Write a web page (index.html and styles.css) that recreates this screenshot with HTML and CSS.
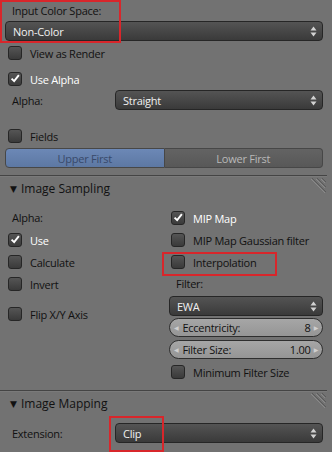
FILE: index.html
```html
<!DOCTYPE html>
<html lang="en">
<head>
  <meta charset="UTF-8" />
  <title>Image Properties</title>
  <link rel="stylesheet" href="styles.css">
</head>
<body>

  <div class="panel">

    <!-- Color space -->
    <div class="label-row">Input Color Space:</div>
    <div class="select">
      <span>Non-Color</span>
      <svg class="updown" width="7" height="11" viewBox="0 0 7 11"><path d="M3.5 0.5 L6.5 4.5 L0.5 4.5 Z M3.5 10.5 L6.5 6.5 L0.5 6.5 Z" fill="#d2d2d2"/></svg>
    </div>

    <div class="check first-check">
      <span class="box"></span>View as Render
    </div>
    <div class="check on alpha-check">
      <span class="box"><svg width="14" height="14" viewBox="0 0 14 14"><path d="M3 6.5 L6 9.5 L11.5 2.5" fill="none" stroke="#fff" stroke-width="2.2"/></svg></span>Use Alpha
    </div>

    <div class="field-row">
      <div class="field-label">Alpha:</div>
      <div class="select grow">
        <span>Straight</span>
        <svg class="updown" width="7" height="11" viewBox="0 0 7 11"><path d="M3.5 0.5 L6.5 4.5 L0.5 4.5 Z M3.5 10.5 L6.5 6.5 L0.5 6.5 Z" fill="#d2d2d2"/></svg>
      </div>
    </div>

    <div class="check fields-check">
      <span class="box"></span>Fields
    </div>

    <div class="toggle">
      <div class="toggle-btn active">Upper First</div>
      <div class="toggle-btn">Lower First</div>
    </div>
  </div>

  <!-- Image Sampling -->
  <div class="sep"></div>
  <div class="section-head">
    <span class="tri">&#9660;</span>Image Sampling
    <svg class="grip" width="20" height="18" viewBox="0 0 20 18">
      <path d="M5 0 L19 14 M10 0 L19 9 M15 0 L19 4" stroke="#5a5a5a" stroke-width="1"/>
      <path d="M4 1 L18 15 M9 1 L18 10 M14 1 L18 5" stroke="#8a8a8a" stroke-width="1"/>
    </svg>
  </div>

  <div class="panel sampling">
    <div class="col">
      <div class="label-row small">Alpha:</div>
      <div class="check on">
        <span class="box"><svg width="14" height="14" viewBox="0 0 14 14"><path d="M3 6.5 L6 9.5 L11.5 2.5" fill="none" stroke="#fff" stroke-width="2.2"/></svg></span>Use
      </div>
      <div class="check"><span class="box"></span>Calculate</div>
      <div class="check"><span class="box"></span>Invert</div>
      <div class="check flip"><span class="box"></span>Flip X/Y Axis</div>
    </div>

    <div class="col right">
      <div class="check on">
        <span class="box"><svg width="14" height="14" viewBox="0 0 14 14"><path d="M3 6.5 L6 9.5 L11.5 2.5" fill="none" stroke="#fff" stroke-width="2.2"/></svg></span>MIP Map
      </div>
      <div class="check"><span class="box"></span>MIP Map Gaussian filter</div>
      <div class="check"><span class="box"></span>Interpolation</div>
      <div class="label-row small">Filter:</div>
      <div class="select ewa">
        <span>EWA</span>
        <svg class="updown" width="7" height="11" viewBox="0 0 7 11"><path d="M3.5 0.5 L6.5 4.5 L0.5 4.5 Z M3.5 10.5 L6.5 6.5 L0.5 6.5 Z" fill="#d2d2d2"/></svg>
      </div>
      <div class="num">
        <span class="arrow">&#9664;</span>
        <span class="num-label">Eccentricity:</span>
        <span class="num-val">8</span>
        <span class="arrow">&#9654;</span>
      </div>
      <div class="num second">
        <span class="arrow">&#9664;</span>
        <span class="num-label">Filter Size:</span>
        <span class="num-val">1.00</span>
        <span class="arrow">&#9654;</span>
      </div>
      <div class="check min-check"><span class="box"></span>Minimum Filter Size</div>
    </div>
  </div>

  <!-- Image Mapping -->
  <div class="sep"></div>
  <div class="section-head">
    <span class="tri">&#9660;</span>Image Mapping
    <svg class="grip" width="20" height="18" viewBox="0 0 20 18">
      <path d="M5 0 L19 14 M10 0 L19 9 M15 0 L19 4" stroke="#5a5a5a" stroke-width="1"/>
      <path d="M4 1 L18 15 M9 1 L18 10 M14 1 L18 5" stroke="#8a8a8a" stroke-width="1"/>
    </svg>
  </div>

  <div class="panel">
    <div class="field-row ext-row">
      <div class="field-label">Extension:</div>
      <div class="select grow">
        <span>Clip</span>
        <svg class="updown" width="7" height="11" viewBox="0 0 7 11"><path d="M3.5 0.5 L6.5 4.5 L0.5 4.5 Z M3.5 10.5 L6.5 6.5 L0.5 6.5 Z" fill="#d2d2d2"/></svg>
      </div>
    </div>
  </div>

  <!-- annotation boxes -->
  <div class="mark mark-space"></div>
  <div class="mark mark-interp"></div>
  <div class="mark mark-clip"></div>

</body>
</html>
```

FILE: styles.css
```css
* {
  margin: 0;
  padding: 0;
  box-sizing: border-box;
}

body {
  font-family: "Open Sans", "DejaVu Sans", sans-serif;
  font-size: 11px;
  letter-spacing: -0.25px;
  background-color: #727272;
  color: #111;
  width: 332px;
  height: 452px;
  overflow: hidden;
  position: relative;
}

.panel {
  padding: 0 9px 0 5px;
}

.label-row {
  height: 21px;
  line-height: 21px;
  padding-left: 7px;
}

.label-row.small {
  height: 22px;
  line-height: 22px;
}

/* dropdown menus */
.select {
  height: 20px;
  border: 1px solid #262626;
  border-radius: 4px;
  background: linear-gradient(#545454, #3a3a3a);
  color: #f0f0f0;
  display: flex;
  align-items: center;
  padding: 0 5px 0 7px;
}

.select span {
  flex: 1;
}

.updown {
  display: block;
}

.grow {
  flex: 1;
}

/* checkboxes */
.check {
  height: 22px;
  display: flex;
  align-items: center;
  gap: 8px;
  padding-left: 3px;
}

.box {
  width: 14px;
  height: 14px;
  border: 1px solid #262626;
  border-radius: 3px;
  background: linear-gradient(#555, #3a3a3a);
  display: flex;
  align-items: center;
  justify-content: center;
}

.box svg {
  display: block;
}

.check.on {
  color: #fff;
}

.first-check {
  height: 20px;
  margin-top: 2px;
}

.alpha-check {
  height: 20px;
  margin-top: 6px;
}

.fields-check {
  height: 20px;
  margin-top: 16px;
}

.field-row {
  display: flex;
  align-items: center;
  margin-top: 1px;
}

.field-label {
  width: 110px;
  padding-left: 7px;
}

/* upper / lower toggle, faded because fields is off */
.toggle {
  display: flex;
  height: 20px;
  margin-top: 2px;
}

.toggle-btn {
  flex: 1;
  display: flex;
  align-items: center;
  justify-content: center;
  border: 1px solid #474747;
  background: linear-gradient(#636363, #585858);
  color: #b9b9b9;
}

.toggle-btn:first-child {
  border-radius: 4px 0 0 4px;
}

.toggle-btn:last-child {
  border-left: none;
  border-radius: 0 4px 4px 0;
}

.toggle-btn.active {
  background: linear-gradient(#6c88b6, #5d78a3);
  color: #38496a;
}

/* panel headers */
.sep {
  width: 327px;
  height: 2px;
  margin-top: 7px;
  border-top: 1px solid #444;
  border-bottom: 1px solid #7a7a7a;
}

.section-head {
  height: 23px;
  width: 327px;
  display: flex;
  align-items: center;
  padding-left: 10px;
  font-size: 12px;
  letter-spacing: 0;
  color: #111;
}

.tri {
  font-size: 9px;
  margin-right: 4px;
}

.grip {
  margin-left: auto;
  align-self: flex-start;
  margin-top: 1px;
}

/* image sampling columns */
.sampling {
  display: flex;
  gap: 4px;
  padding-top: 7px;
}

.col {
  width: 160px;
}

.col.right {
  flex: 1;
}

.col.right .check {
  padding-left: 2px;
}

.flip {
  margin-top: 8px;
}

.ewa {
  margin-top: 1px;
}

.num {
  height: 19px;
  margin-top: 2px;
  border: 1px solid #2e2e2e;
  border-radius: 10px;
  background: linear-gradient(#a6a6a6, #959595);
  display: flex;
  align-items: center;
  padding: 0 4px;
  color: #111;
}

.num.second {
  margin-top: 3px;
}

.num .arrow {
  font-size: 6px;
  color: #cfcfcf;
}

.num-label {
  flex: 1;
  padding-left: 4px;
}

.num-val {
  padding-right: 3px;
}

.min-check {
  margin-top: 2px;
}

.ext-row {
  margin-top: 8px;
}

/* red annotation frames laid over the screenshot */
.mark {
  position: absolute;
  border: 2px solid #d8262b;
}

.mark-space {
  left: 0;
  top: 0;
  width: 121px;
  height: 43px;
}

.mark-interp {
  left: 162px;
  top: 252px;
  width: 115px;
  height: 24px;
}

.mark-clip {
  left: 109px;
  top: 416px;
  width: 55px;
  height: 36px;
}
```
